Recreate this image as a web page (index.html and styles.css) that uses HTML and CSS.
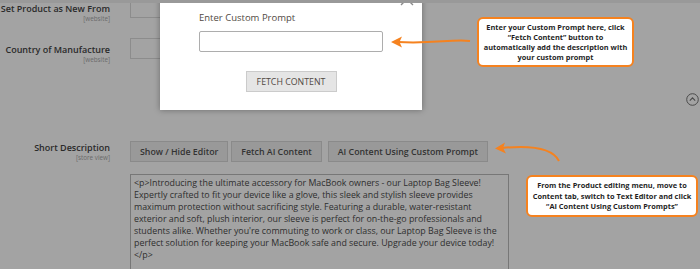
FILE: index.html
```html
<!DOCTYPE html>
<html lang="en">
<head>
    <meta charset="UTF-8">
    <meta name="viewport" content="width=device-width, initial-scale=1.0">
    <title>Product Edit - AI Content</title>
    <link rel="stylesheet" href="styles.css">
</head>
<body>
    <div class="topbar"></div>

    <main class="form">
        <div class="field">
            <div class="label">
                <span class="title">Set Product as New From</span>
                <span class="scope">[website]</span>
            </div>
            <div class="control"><div class="input"></div></div>
        </div>

        <div class="field">
            <div class="label">
                <span class="title">Country of Manufacture</span>
                <span class="scope">[website]</span>
            </div>
            <div class="control"><div class="input"></div></div>
        </div>

        <div class="section-toggle">
            <svg width="13" height="13" viewBox="0 0 13 13">
                <circle cx="6.5" cy="6.5" r="5.8" fill="none" stroke="#4a4a4a" stroke-width="1"/>
                <path d="M3.8 7.6 L6.5 4.9 L9.2 7.6" fill="none" stroke="#4a4a4a" stroke-width="1.1"/>
            </svg>
        </div>

        <div class="field field-desc">
            <div class="label">
                <span class="title">Short Description</span>
                <span class="scope">[store view]</span>
            </div>
            <div class="control">
                <div class="editor-actions">
                    <button class="action">Show / Hide Editor</button>
                    <button class="action">Fetch AI Content</button>
                    <button class="action">AI Content Using Custom Prompt</button>
                </div>
                <div class="textarea">
                    <span>&lt;p&gt;Introducing the ultimate accessory for MacBook owners - our Laptop Bag Sleeve!</span>
                    <span>Expertly crafted to fit your device like a glove, this sleek and stylish sleeve provides</span>
                    <span>maximum protection without sacrificing style. Featuring a durable, water-resistant</span>
                    <span>exterior and soft, plush interior, our sleeve is perfect for on-the-go professionals and</span>
                    <span>students alike. Whether you're commuting to work or class, our Laptop Bag Sleeve is the</span>
                    <span>perfect solution for keeping your MacBook safe and secure. Upgrade your device today!</span>
                    <span>&lt;/p&gt;</span>
                </div>
            </div>
        </div>
    </main>

    <div class="modal">
        <svg class="modal-close" width="14" height="14" viewBox="0 0 14 14">
            <path d="M1 1 L13 13 M13 1 L1 13" stroke="#8a8a8a" stroke-width="1.4"/>
        </svg>
        <label class="modal-label">Enter Custom Prompt</label>
        <div class="modal-input"></div>
        <button class="modal-btn">FETCH CONTENT</button>
    </div>

    <div class="callout callout-prompt">
        Enter your Custom Prompt here, click<br>
        “Fetch Content” button to<br>
        automatically add the description with<br>
        your custom prompt
    </div>

    <div class="callout callout-menu">
        From the Product editing menu, move to<br>
        Content tab, switch to Text Editor and click<br>
        “AI Content Using Custom Prompts”
    </div>

    <svg class="arrows" width="700" height="269" viewBox="0 0 700 269">
        <path d="M470 41 C 452 39, 432 44, 398 42" fill="none" stroke="#f5821f" stroke-width="2"/>
        <path d="M391 42 L402 36.5 L399.5 42 L402 47.5 Z" fill="#f5821f"/>
        <path d="M559 161 C 553 149, 532 145, 502 148" fill="none" stroke="#f5821f" stroke-width="2"/>
        <path d="M495 148.5 L505 142.5 L503 148 L506 153.5 Z" fill="#f5821f"/>
    </svg>
</body>
</html>
```

FILE: styles.css
```css
body {
    margin: 0;
    width: 700px;
    height: 269px;
    overflow: hidden;
    position: relative;
    background-color: #a3a3a3;
    font-family: 'Open Sans', 'Liberation Sans', sans-serif;
    color: #2c2c2c;
}
.topbar {
    height: 3px;
    background-color: #999;
    position: relative;
    z-index: 1;
}
.form {
    margin-top: -6px;
    display: flex;
    flex-direction: column;
}
.field {
    display: grid;
    grid-template-columns: 110px 1fr;
    column-gap: 20px;
    margin-bottom: 15px;
}
.label {
    display: flex;
    flex-direction: column;
    align-items: flex-end;
    padding-top: 6px;
}
.title {
    font-size: 9px;
    font-weight: 600;
    line-height: 12px;
    color: #2a2a2a;
    white-space: nowrap;
}
.scope {
    font-size: 6.3px;
    line-height: 8px;
    color: #6a6a6a;
}
.input {
    width: 260px;
    height: 19px;
    border: 1px solid #8c8c8c;
}
.section-toggle {
    display: flex;
    justify-content: flex-end;
    margin: 14px 1px 35px 0;
    height: 13px;
}
.field-desc .label {
    padding-top: 1px;
}
.editor-actions {
    display: flex;
    gap: 3px;
    height: 21px;
}
.action {
    font-family: inherit;
    font-size: 8.8px;
    font-weight: 600;
    color: #333;
    background-color: #999;
    border: 1px solid #8a8a8a;
    padding: 0 9px;
    margin: 0;
    white-space: nowrap;
}
.action:nth-child(2) {
    margin-right: 3px;
}
.textarea {
    margin-top: 12px;
    width: 379px;
    height: 120px;
    border: 1px solid #777;
    padding: 2px 3px;
    box-sizing: border-box;
    font-size: 8.85px;
    line-height: 12px;
    color: #2e2e2e;
}
.textarea span {
    display: block;
    white-space: nowrap;
}
.modal {
    position: absolute;
    left: 160px;
    top: -10px;
    width: 262px;
    height: 120px;
    box-sizing: border-box;
    padding: 22px 39px 0;
    background-color: #fff;
    box-shadow: 0 0 6px rgba(0, 0, 0, 0.35);
    display: flex;
    flex-direction: column;
    align-items: center;
}
.modal-close {
    position: absolute;
    right: 8px;
    top: 2px;
}
.modal-label {
    align-self: flex-start;
    font-size: 9.5px;
    line-height: 12px;
    color: #514943;
}
.modal-input {
    margin-top: 7px;
    width: 100%;
    height: 21px;
    box-sizing: border-box;
    border: 1px solid #adadad;
    border-radius: 2px;
}
.modal-btn {
    margin-top: 19px;
    width: 91px;
    height: 21px;
    font-family: inherit;
    font-size: 8.8px;
    color: #514943;
    background-color: #e5e5e5;
    border: 1px solid #cbcbcb;
    padding: 0;
}
.callout {
    position: absolute;
    box-sizing: border-box;
    background-color: #fff;
    border: 2px solid #f5821f;
    border-radius: 6px;
    font-size: 7.4px;
    font-weight: 700;
    color: #1f1f1f;
    text-align: center;
    white-space: nowrap;
    display: flex;
    align-items: center;
    justify-content: center;
}
.callout-prompt {
    left: 477px;
    top: 17px;
    width: 157px;
    height: 50px;
    line-height: 10px;
}
.callout-menu {
    left: 526px;
    top: 175px;
    width: 172px;
    height: 42px;
    line-height: 10.5px;
}
.arrows {
    position: absolute;
    left: 0;
    top: 0;
    pointer-events: none;
}
```
